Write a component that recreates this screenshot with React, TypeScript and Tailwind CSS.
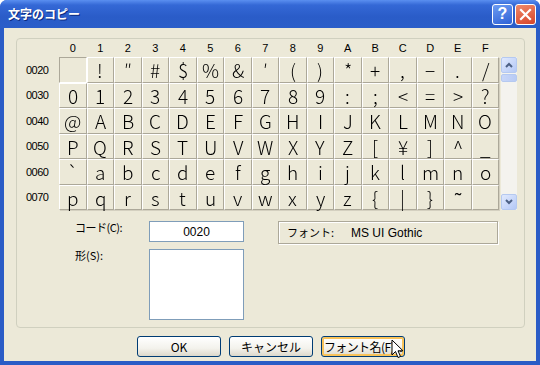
import React from "react";

const cols = ["0", "1", "2", "3", "4", "5", "6", "7", "8", "9", "A", "B", "C", "D", "E", "F"];

const rows: { label: string; chars: string[] }[] = [
  { label: "0020", chars: ["", "!", "″", "#", "$", "%", "&", "′", "(", ")", "*", "+", ",", "−", ".", "/"] },
  { label: "0030", chars: ["0", "1", "2", "3", "4", "5", "6", "7", "8", "9", ":", ";", "<", "=", ">", "?"] },
  { label: "0040", chars: ["@", "A", "B", "C", "D", "E", "F", "G", "H", "I", "J", "K", "L", "M", "N", "O"] },
  { label: "0050", chars: ["P", "Q", "R", "S", "T", "U", "V", "W", "X", "Y", "Z", "[", "¥", "]", "^", "_"] },
  { label: "0060", chars: ["`", "a", "b", "c", "d", "e", "f", "g", "h", "i", "j", "k", "l", "m", "n", "o"] },
  { label: "0070", chars: ["p", "q", "r", "s", "t", "u", "v", "w", "x", "y", "z", "{", "|", "}", "˜", ""] },
];

export default function App() {
  return (
    <div className="relative h-[365px] w-[540px] overflow-hidden rounded-t-[7px] bg-[#2a5cc6] font-['Liberation_Sans','Noto_Sans_CJK_JP',sans-serif] text-black">
      <TitleBar />

      <div className="mx-[4px] flex h-[333px] flex-col bg-[#ece9d8] px-[12px] pt-[10px]">
        {/* group box */}
        <div className="h-[290px] w-[509px] rounded-[4px] border border-[#d0d0bf] pt-[1px]">
          <div className="flex h-[16px] items-center pl-[42px]">
            <div className="grid w-[440px] grid-cols-16 text-[11px] leading-none">
              {cols.map((c) => (
                <span key={c} className="text-center">{c}</span>
              ))}
            </div>
          </div>

          <div className="mt-[1px] flex">
            <div className="flex w-[42px] flex-col pl-[9px] text-[11px] tracking-[-0.5px]">
              {rows.map((r) => (
                <div key={r.label} className="flex h-[25.5px] items-center">{r.label}</div>
              ))}
            </div>
            <div className="grid w-[440px] grid-cols-16">
              {rows.map((r, ri) =>
                r.chars.map((ch, ci) => (
                  <CharCell key={`${ri}-${ci}`} ch={ch} selected={ri === 0 && ci === 0} />
                ))
              )}
            </div>
            <ScrollBar />
          </div>

          <div className="mt-[11px] flex pl-[58px] font-['Noto_Sans_CJK_JP',sans-serif] text-[11px]">
            <div className="flex w-[74px] flex-col">
              <span className="mt-[-1px] leading-[14px] tracking-[-0.5px]">コード(C):</span>
              <span className="mt-[14px] leading-[14px]">形(S):</span>
            </div>
            <div className="flex w-[95px] flex-col">
              <div className="flex h-[21px] items-center justify-center border border-[#7f9db9] bg-white font-['Liberation_Sans',sans-serif] text-[12px]">
                0020
              </div>
              <div className="mt-[7px] h-[71px] border border-[#7f9db9] bg-white" />
            </div>
            <div className="ml-[34px] flex h-[23px] w-[220px] items-center border border-[#aca899] pl-[8px] text-[12px] shadow-[inset_1px_1px_0_#ffffff,1px_1px_0_#ffffff]">
              <span className="w-[64px] text-[11px]">フォント:</span>
              <span className="font-['Liberation_Sans',sans-serif]">MS UI Gothic</span>
            </div>
          </div>
        </div>

        <div className="mt-[8px] flex gap-[8px] pl-[121px] font-['Noto_Sans_CJK_JP',sans-serif] text-[12px]">
          <XpButton label="OK" />
          <XpButton label="キャンセル" />
          <XpButton label="フォント名(F)..." hot />
        </div>
      </div>

      <svg className="absolute left-[391px] top-[339px]" width="14" height="22" viewBox="0 0 14 22">
        <path
          d="M1 1 L1 16 L4.5 12.5 L7 18.5 L9.5 17.5 L7 11.8 L12 11.8 Z"
          fill="#ffffff"
          stroke="#000000"
          strokeWidth="1"
          strokeLinejoin="miter"
        />
      </svg>
    </div>
  );
}

function TitleBar() {
  return (
    <div className="flex h-[28px] items-center justify-between bg-[linear-gradient(180deg,#5a8ff0_0%,#3468d6_18%,#2a5cc8_60%,#2b5ec9_100%)] pl-[8px] pr-[4px]">
      <span className="font-['Noto_Sans_CJK_JP',sans-serif] text-[12px] font-bold text-white [text-shadow:1px_1px_0_#0a2a80]">
        文字のコピー
      </span>
      <div className="flex gap-[2px]">
        <div className="flex h-[21px] w-[21px] items-center justify-center rounded-[3px] border border-white bg-[linear-gradient(160deg,#6d9cf2,#2f62d6)] font-['Liberation_Sans',sans-serif] text-[16px] font-bold text-white">
          ?
        </div>
        <div className="flex h-[21px] w-[21px] items-center justify-center rounded-[3px] border border-white bg-[linear-gradient(160deg,#ef8a6a,#d7452a)]">
          <svg width="13" height="13" viewBox="0 0 13 13">
            <path d="M2 2 L11 11 M11 2 L2 11" stroke="#ffffff" strokeWidth="2.2" strokeLinecap="square" />
          </svg>
        </div>
      </div>
    </div>
  );
}

function CharCell({ ch, selected }: { ch: string; selected?: boolean }) {
  return (
    <div
      className={
        selected
          ? "flex h-[25.5px] items-center justify-center border border-b-white border-l-[#aca899] border-r-white border-t-[#aca899] bg-[#ece9d8]"
          : "flex h-[25.5px] items-center justify-center border border-b-[#aca899] border-l-white border-r-[#aca899] border-t-white bg-[#ece9d8] shadow-[1px_1px_0_#d4d0c0]"
      }
    >
      <span className="font-['Noto_Sans_CJK_JP',sans-serif] text-[19px] font-light leading-none text-black [will-change:transform]">
        {ch}
      </span>
    </div>
  );
}

function ScrollBar() {
  return (
    <div className="ml-[2px] flex h-[153px] w-[16px] flex-col bg-[#f4f3ee]">
      <div className="flex h-[16px] items-center justify-center rounded-[2px] border border-[#b5c9f0] bg-[linear-gradient(135deg,#e1eafe,#b4c8f6)]">
        <svg width="8" height="6" viewBox="0 0 8 6">
          <path d="M1 5 L4 2 L7 5" fill="none" stroke="#4d6185" strokeWidth="2" />
        </svg>
      </div>
      <div className="mt-[1px] h-[8px] rounded-[2px] border border-[#b5c9f0] bg-[linear-gradient(90deg,#c8d6f8,#b8cbf5)]" />
      <div className="flex-1" />
      <div className="flex h-[16px] items-center justify-center rounded-[2px] border border-[#b5c9f0] bg-[linear-gradient(135deg,#e1eafe,#b4c8f6)]">
        <svg width="8" height="6" viewBox="0 0 8 6">
          <path d="M1 1 L4 4 L7 1" fill="none" stroke="#4d6185" strokeWidth="2" />
        </svg>
      </div>
    </div>
  );
}

function XpButton({ label, hot }: { label: string; hot?: boolean }) {
  return (
    <div
      className={
        hot
          ? "flex h-[21px] w-[84px] items-center justify-center whitespace-nowrap rounded-[3px] border border-[#003c74] bg-[linear-gradient(180deg,#ffffff,#f3f2ec_60%,#dcd8cb)] tracking-[-0.6px] shadow-[inset_0_0_0_2px_#f9c35a]"
          : "flex h-[21px] w-[84px] items-center justify-center whitespace-nowrap rounded-[3px] border border-[#003c74] bg-[linear-gradient(180deg,#ffffff,#f3f2ec_60%,#dcd8cb)]"
      }
    >
      {label}
    </div>
  );
}
